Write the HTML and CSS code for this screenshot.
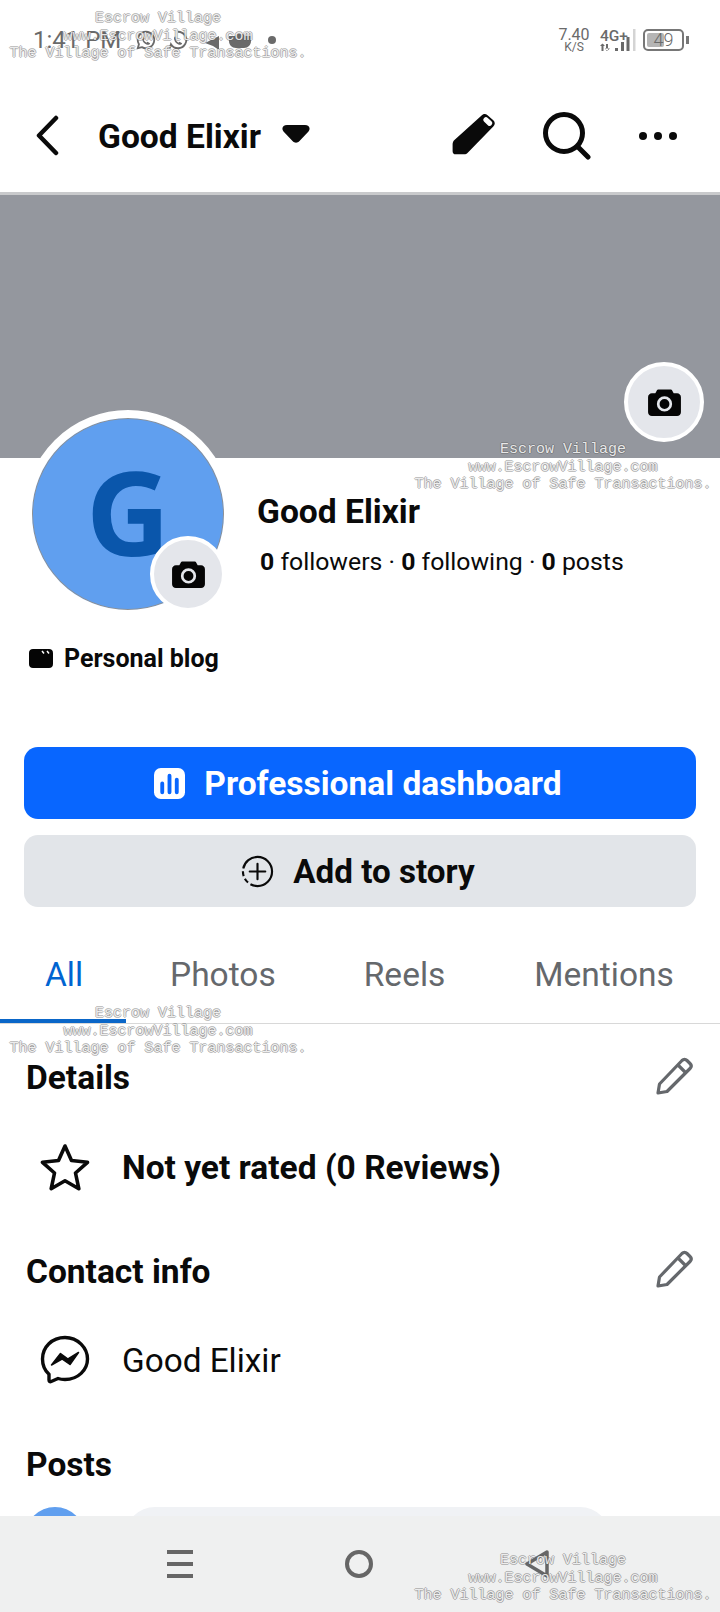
FILE: index.html
```html
<!DOCTYPE html>
<html lang="en">
<head>
    <meta charset="UTF-8">
    <meta name="viewport" content="width=device-width, initial-scale=1.0">
    <title>Good Elixir</title>
    <link rel="stylesheet" href="styles.css">
</head>
<body>
    <div class="phone">
        <div class="status-bar">
            <div class="status-left">
                <span class="clock">1:41 PM</span>
                <svg class="status-icon icon-chat" viewBox="0 0 24 24"><path d="M12 3a9 9 0 0 0-7.700 13.600L3 21l4.500-1.200A9 9 0 1 0 12 3z" fill="none" stroke="currentColor" stroke-width="2"/><path d="M9 8l1.500 3-1 1a7 7 0 0 0 3 3l1-1 3 1.500c-.5 2-2.500 2-4 1.500-2-.8-4-2.800-4.500-5C7.300 10 8 8.500 9 8z" fill="currentColor"/></svg>
                <svg class="status-icon icon-chat2" viewBox="0 0 24 24"><path d="M12 3a9 9 0 1 1-7.700 13.600L3 21" fill="none" stroke="currentColor" stroke-width="2"/><path d="M9 8l1.500 3-1 1a7 7 0 0 0 3 3l1-1 3 1.500c-.5 2-2.500 2-4 1.500-2-.8-4-2.800-4.500-5C7.300 10 8 8.500 9 8z" fill="currentColor"/></svg>
                <svg class="icon-plane" viewBox="0 0 14 14"><path d="M14 0v14L8 10 0 7z" fill="currentColor"/></svg>
                <svg class="icon-bag" viewBox="0 0 24 14"><path d="M1 2h6l2-2h6l2 2h6v5c0 4-3 7-7 7H8c-4 0-7-3-7-7z" fill="currentColor"/></svg>
                <span class="status-dot"></span>
            </div>
            <div class="status-right">
                <div class="speed"><span>7.40</span><small>K/S</small></div>
                <div class="network">
                    <svg viewBox="0 0 36 22" class="signal"><path d="M1.500 15h2v7h-2zM0 17l2.500-2.500L5 17zM6 15h2v7H6zM5 19.500l2 2.500 3-2.500zM15 19h3v3h-3zM21 13h3v9h-3zM26.500 8h3v14h-3z" fill="currentColor"/><path d="M33 0h2.500v22H33z" fill="#d4d4d4"/></svg>
                    <span>4G+</span>
                </div>
                <div class="battery"><span class="battery-fill"></span><span class="battery-num">49</span></div>
            </div>
        </div>

        <div class="topbar">
            <svg class="back-icon" viewBox="0 0 24 44"><path d="M21 4L4 21.500 21 39" fill="none" stroke="#0a0a0a" stroke-width="4.500" stroke-linecap="round" stroke-linejoin="round"/></svg>
            <h1 class="page-name">Good Elixir</h1>
            <svg class="caret-icon" viewBox="0 0 28 18"><path d="M5 0h18c4 0 6 3.500 3.500 6.500L17.500 16c-2 2.300-5 2.300-7 0L1.500 6.500C-1 3.500 1 0 5 0z" fill="#0a0a0a"/></svg>
            <div class="topbar-actions">
                <svg class="edit-solid" viewBox="0 0 46 46"><path d="M30 3.500c2-2 4-2 6-.5l5.500 5c2 2 1.800 4.300 0 6L17 39c-1 1-2 1.500-3.500 1.500H5.500c-2 0-3-1-3-3v-6.500c0-1.500.5-3 1.500-4z" fill="#0a0a0a"/><path d="M34.500 7.500l3.500 3.300" stroke="#fff" stroke-width="5" stroke-linecap="round"/></svg>
                <svg class="search-icon" viewBox="0 0 48 48"><circle cx="21" cy="21" r="18.500" fill="none" stroke="#0a0a0a" stroke-width="5"/><path d="M34.500 34.500L45 45" stroke="#0a0a0a" stroke-width="5" stroke-linecap="round"/></svg>
                <div class="more-icon"><span></span><span></span><span></span></div>
            </div>
        </div>

        <div class="content">
            <div class="cover">
                <div class="cover-camera">
                    <svg class="camera-icon" viewBox="0 0 34 30"><path d="M11 1.500h12c1 0 1.700.5 2.200 1.500l1.300 2.500H30c2.200 0 4 1.800 4 4V25c0 2.500-1.800 4-4 4H4c-2.200 0-4-1.500-4-4V9.500c0-2.200 1.800-4 4-4h3.500L8.800 3c.5-1 1.200-1.500 2.200-1.500z" fill="#050505"/><circle cx="17" cy="16.500" r="6.500" fill="none" stroke="#e4e6eb" stroke-width="2.800"/></svg>
                </div>
            </div>

            <div class="profile">
                <div class="avatar-wrap">
                    <div class="avatar">G</div>
                    <div class="avatar-camera">
                        <svg class="camera-icon" viewBox="0 0 34 30"><path d="M11 1.500h12c1 0 1.700.5 2.200 1.500l1.300 2.500H30c2.200 0 4 1.800 4 4V25c0 2.500-1.800 4-4 4H4c-2.200 0-4-1.500-4-4V9.500c0-2.200 1.800-4 4-4h3.500L8.800 3c.5-1 1.200-1.500 2.200-1.500z" fill="#050505"/><circle cx="17" cy="16.500" r="6.500" fill="none" stroke="#e4e6eb" stroke-width="2.800"/></svg>
                    </div>
                </div>
                <div class="profile-info">
                    <div class="profile-name">Good Elixir</div>
                    <div class="profile-stats"><b>0</b> followers · <b>0</b> following · <b>0</b> posts</div>
                </div>
            </div>

            <div class="category">
                <svg class="category-icon" viewBox="0 0 24 19"><path d="M4 0h16c2.500 0 4 1.500 4 4v11c0 2.500-1.500 4-4 4H4c-2.500 0-4-1.500-4-4V4c0-2.500 1.500-4 4-4z" fill="#050505"/><path d="M13 2l2 2.500M18 2l2 2.500" stroke="#fff" stroke-width="1.500"/></svg>
                <span>Personal blog</span>
            </div>

            <div class="buttons">
                <div class="btn btn-primary">
                    <svg class="btn-icon" viewBox="0 0 32 32"><rect width="32" height="32" rx="7" fill="#fff"/><path d="M8.500 16v9M16 8v17M23.500 12v13" stroke="#0866ff" stroke-width="4" stroke-linecap="round"/></svg>
                    <span>Professional dashboard</span>
                </div>
                <div class="btn btn-secondary">
                    <svg class="btn-icon story-icon" viewBox="0 0 34 34"><circle cx="17" cy="17" r="15" fill="none" stroke="#0a0a0a" stroke-width="2.200" stroke-dasharray="31 3 5 3 5 3 44 0"/><path d="M17 9v16M9 17h16" stroke="#0a0a0a" stroke-width="2.200" stroke-linecap="round"/></svg>
                    <span>Add to story</span>
                </div>
            </div>

            <div class="tabs">
                <div class="tab tab-active">All</div>
                <div class="tab tab-photos">Photos</div>
                <div class="tab tab-reels">Reels</div>
                <div class="tab tab-mentions">Mentions</div>
            </div>

            <section class="section section-details">
                <div class="section-head">
                    <h2>Details</h2>
                    <svg class="edit-icon" viewBox="0 0 38 38"><path d="M27 3.500c1.500-1.500 3.500-1.500 5 0l3 3c1.500 1.500 1.500 3.500 0 5L12 34.500l-9 1.500 1.500-9z" fill="none" stroke="#65686c" stroke-width="3.200" stroke-linejoin="round"/><path d="M23 8l7.500 7.500" stroke="#65686c" stroke-width="3.200"/></svg>
                </div>
                <div class="row row-bold">
                    <svg class="row-icon" viewBox="0 0 50 48"><path d="M25 3l6.500 14.500 16 1.800-12 10.700 3.300 15.700L25 37.700 11.200 45.700 14.500 30l-12-10.700 16-1.800z" fill="none" stroke="#0a0a0a" stroke-width="3.600" stroke-linejoin="round"/></svg>
                    <span>Not yet rated (0 Reviews)</span>
                </div>
            </section>

            <section class="section section-contact">
                <div class="section-head">
                    <h2>Contact info</h2>
                    <svg class="edit-icon edit-contact" viewBox="0 0 38 38"><path d="M27 3.500c1.500-1.500 3.500-1.500 5 0l3 3c1.500 1.500 1.500 3.500 0 5L12 34.500l-9 1.500 1.500-9z" fill="none" stroke="#65686c" stroke-width="3.200" stroke-linejoin="round"/><path d="M23 8l7.500 7.500" stroke="#65686c" stroke-width="3.200"/></svg>
                </div>
                <div class="row row-contact">
                    <svg class="row-icon" viewBox="0 0 50 50"><path d="M25 2.500C12 2.500 2.500 12 2.500 24c0 6 2.300 11.500 6.500 15.300V45c0 1.500 1 2 2.200 1.500l6.800-3c2.200.7 4.500 1 7 1 13 0 22.500-9.500 22.500-20.500S38 2.500 25 2.500z" fill="none" stroke="#0a0a0a" stroke-width="3.400" stroke-linejoin="round"/><path d="M11.500 30l9-11.500 7.500 5.500 10.500-6.500-8.500 12-8-5.500z" fill="#0a0a0a" stroke="#0a0a0a" stroke-width="1.500" stroke-linejoin="round"/></svg>
                    <span>Good Elixir</span>
                </div>
            </section>

            <section class="section section-posts">
                <h2>Posts</h2>
                <div class="composer">
                    <div class="composer-avatar"></div>
                    <div class="composer-input"></div>
                </div>
            </section>
        </div>

        <div class="nav-bar">
            <div class="nav-menu"><span></span><span></span><span></span></div>
            <div class="nav-home"></div>
            <svg class="nav-back" viewBox="0 0 26 28"><path d="M23 2L3 14l20 12z" fill="none" stroke="#666" stroke-width="3.500" stroke-linejoin="round"/></svg>
        </div>

        <div class="watermark wm-a">Escrow Village<br>www.EscrowVillage.com<br>The Village of Safe Transactions.</div>
        <div class="watermark wm-b">Escrow Village<br>www.EscrowVillage.com<br>The Village of Safe Transactions.</div>
        <div class="watermark wm-c">Escrow Village<br>www.EscrowVillage.com<br>The Village of Safe Transactions.</div>
        <div class="watermark wm-d">Escrow Village<br>www.EscrowVillage.com<br>The Village of Safe Transactions.</div>
    </div>
</body>
</html>
```

FILE: styles.css
```css
* {
    box-sizing: border-box;
}

body {
    font-family: Roboto, 'Liberation Sans', sans-serif;
    margin: 0;
    padding: 0;
    background-color: #fff;
    color: #0a0a0a;
}

.phone {
    width: 720px;
    height: 1612px;
    position: relative;
    overflow: hidden;
    display: flex;
    flex-direction: column;
}

/* status bar */
.status-bar {
    height: 80px;
    flex-shrink: 0;
    display: flex;
    justify-content: space-between;
    align-items: center;
    padding: 0 31px 0 33px;
    color: #6a6a6a;
}

.status-left {
    display: flex;
    align-items: center;
}

.clock {
    font-size: 24px;
    width: 102px;
}

.status-icon {
    width: 22px;
    height: 22px;
}

.icon-chat2 {
    margin-left: 10px;
}

.icon-plane {
    width: 14px;
    height: 14px;
    margin: 6px 0 0 16px;
}

.icon-bag {
    width: 24px;
    height: 14px;
    margin: 2px 0 0 9px;
}

.status-dot {
    width: 8px;
    height: 8px;
    border-radius: 50%;
    background-color: #6a6a6a;
    margin-left: 16px;
}

.status-right {
    display: flex;
    align-items: center;
}

.speed {
    display: flex;
    flex-direction: column;
    align-items: center;
    width: 28px;
    font-size: 16px;
    line-height: 14px;
    margin-right: 12px;
}

.speed small {
    font-size: 12px;
    line-height: 11px;
}

.network {
    width: 36px;
    height: 22px;
    position: relative;
    font-size: 15.500px;
    font-weight: 500;
    line-height: 14px;
    margin-right: 7px;
}

.signal {
    position: absolute;
    left: 0;
    top: 0;
    width: 36px;
    height: 22px;
}

.network span {
    position: relative;
}

.battery {
    width: 41px;
    height: 22px;
    border: 2px solid #777;
    border-radius: 5px;
    position: relative;
    text-align: center;
    font-size: 18px;
    font-weight: 300;
    line-height: 18px;
    margin-right: 5px;
}

.battery::after {
    content: "";
    position: absolute;
    right: -7px;
    top: 5px;
    width: 3px;
    height: 8px;
    background-color: #777;
}

.battery-fill {
    position: absolute;
    left: 2px;
    top: 2px;
    bottom: 2px;
    width: 17px;
    background-color: #b5b5b5;
    border-radius: 2px;
}

.battery-num {
    position: relative;
}

/* top bar */
.topbar {
    height: 115px;
    flex-shrink: 0;
    display: flex;
    align-items: center;
    padding: 0 43px 0 35px;
    border-bottom: 3px solid #c9cacc;
}

.back-icon {
    width: 24px;
    height: 44px;
    margin-right: 39px;
}

.page-name {
    margin: 0;
    font-size: 33.600px;
    font-weight: 700;
}

.caret-icon {
    width: 28px;
    height: 18px;
    margin: -4px 0 0 21px;
}

.topbar-actions {
    margin-left: auto;
    display: flex;
    align-items: center;
}

.edit-solid {
    width: 48px;
    height: 48px;
    margin-right: 45px;
}

.search-icon {
    width: 48px;
    height: 48px;
    margin-right: 48px;
}

.more-icon {
    display: flex;
    gap: 7px;
    margin-top: -1px;
}

.more-icon span {
    width: 8px;
    height: 8px;
    border-radius: 50%;
    background-color: #0a0a0a;
}

/* main column */
.content {
    flex: 1;
    overflow: hidden;
}

.cover {
    height: 263px;
    background-color: #94979e;
    display: flex;
    justify-content: flex-end;
    align-items: flex-start;
    padding: 167px 16px 0 0;
}

.cover-camera {
    width: 80px;
    height: 80px;
    border-radius: 50%;
    background-color: #e4e6eb;
    border: 4px solid #fff;
    display: flex;
    align-items: center;
    justify-content: center;
}

.camera-icon {
    width: 33px;
    height: 29px;
}

.profile {
    display: flex;
    height: 183px;
    padding-left: 24px;
}

.avatar-wrap {
    width: 208px;
    height: 208px;
    margin-top: -48px;
    position: relative;
    flex-shrink: 0;
}

.avatar {
    width: 208px;
    height: 208px;
    border-radius: 50%;
    border: 8px solid #fff;
    background-color: #609fef;
    box-shadow: inset 0 0 0 1px #8d9094;
    color: #0a56ab;
    font-family: 'Open Sans', sans-serif;
    font-weight: 700;
    font-size: 116px;
    padding-bottom: 6px;
    display: flex;
    align-items: center;
    justify-content: center;
}

.avatar-camera {
    position: absolute;
    left: 126px;
    top: 126px;
    width: 76px;
    height: 76px;
    border-radius: 50%;
    background-color: #e4e6eb;
    border: 4px solid #fff;
    display: flex;
    align-items: center;
    justify-content: center;
}

.profile-info {
    margin-left: 25px;
    padding-top: 33px;
}

.profile-name {
    font-size: 33.600px;
    font-weight: 700;
    line-height: 42px;
}

.profile-stats {
    margin: 12px 0 0 3px;
    font-size: 24.800px;
    line-height: 34px;
}

.category {
    display: flex;
    align-items: center;
    padding-left: 29px;
    font-size: 25px;
    font-weight: 700;
    height: 34px;
}

.category-icon {
    width: 24px;
    height: 19px;
    margin-right: 11px;
}

.buttons {
    padding: 72px 24px 0;
    display: flex;
    flex-direction: column;
    gap: 16px;
}

.btn {
    height: 72px;
    border-radius: 14px;
    display: flex;
    align-items: center;
    justify-content: center;
    padding-right: 4px;
    font-size: 33.500px;
    font-weight: 700;
}

.btn-primary {
    background-color: #0866ff;
    color: #fff;
}

.btn-secondary {
    background-color: #e2e5e9;
    font-size: 33.200px;
}

.btn-icon {
    width: 31px;
    height: 31px;
    margin-right: 19px;
}

.story-icon {
    width: 33px;
    height: 33px;
}

/* tabs */
.tabs {
    margin-top: 32px;
    height: 85px;
    border-bottom: 1px solid #d8d8d8;
    display: flex;
    position: relative;
    font-size: 33.500px;
    color: #65686c;
}

.tab {
    height: 84px;
    padding-top: 15px;
    line-height: 42px;
}

.tab-active {
    width: 126px;
    padding-left: 45px;
    color: #0064d1;
    border-bottom: 4px solid #0a66c8;
}

.tab-photos {
    margin-left: 44px;
}

.tab-reels {
    margin-left: 88px;
}

.tab-mentions {
    margin-left: 89px;
}

/* sections */
.section {
    padding: 0 27px 0 26px;
}

.section h2 {
    margin: 0;
    font-size: 33.500px;
    font-weight: 700;
    line-height: 42px;
}

.section-details {
    padding-top: 33px;
}

.section-contact {
    padding-top: 59px;
}

.section-posts {
    padding-top: 59px;
}

.section-head {
    display: flex;
    justify-content: space-between;
    align-items: flex-start;
}

.edit-icon {
    width: 38px;
    height: 38px;
}

.edit-contact {
    margin-top: -1px;
}

.row {
    display: flex;
    align-items: center;
    height: 50px;
    margin-top: 43px;
    font-size: 33.500px;
}

.row-contact {
    margin-top: 42px;
    font-size: 33.300px;
}

.row-bold {
    font-weight: 700;
}

.row-icon {
    width: 50px;
    height: 50px;
    margin: 0 32px 0 14px;
    flex-shrink: 0;
}

.composer {
    display: flex;
    margin: 21px 0 0 -1px;
    gap: 40px;
}

.composer-avatar {
    width: 60px;
    height: 60px;
    border-radius: 50%;
    background-color: #609fef;
}

.composer-input {
    width: 485px;
    height: 60px;
    border-radius: 30px;
    background-color: #f0f2f5;
}

/* android nav */
.nav-bar {
    height: 96px;
    flex-shrink: 0;
    background-color: #eff0f0;
    display: flex;
    align-items: center;
    padding: 0 170px 0 167px;
    justify-content: space-between;
}

.nav-menu {
    display: flex;
    flex-direction: column;
    gap: 8px;
}

.nav-menu span {
    width: 26px;
    height: 4px;
    background-color: #666;
}

.nav-home {
    width: 28px;
    height: 28px;
    border: 4px solid #666;
    border-radius: 50%;
}

.nav-back {
    width: 26px;
    height: 28px;
}

/* stamped-on watermark */
.watermark {
    position: absolute;
    width: 300px;
    font-family: 'Liberation Mono', monospace;
    font-size: 15px;
    line-height: 17.500px;
    text-align: center;
    white-space: nowrap;
    color: rgba(255, 255, 255, 0.85);
    text-shadow: 1px 0 rgba(90, 90, 90, 0.4), -1px 0 rgba(90, 90, 90, 0.4), 0 1px rgba(90, 90, 90, 0.4), 0 -1px rgba(90, 90, 90, 0.4);
}

.wm-a {
    left: 8px;
    top: 10px;
}

.wm-b {
    left: 413px;
    top: 441px;
}

.wm-c {
    left: 8px;
    top: 1005px;
}

.wm-d {
    left: 413px;
    top: 1552px;
}
```
